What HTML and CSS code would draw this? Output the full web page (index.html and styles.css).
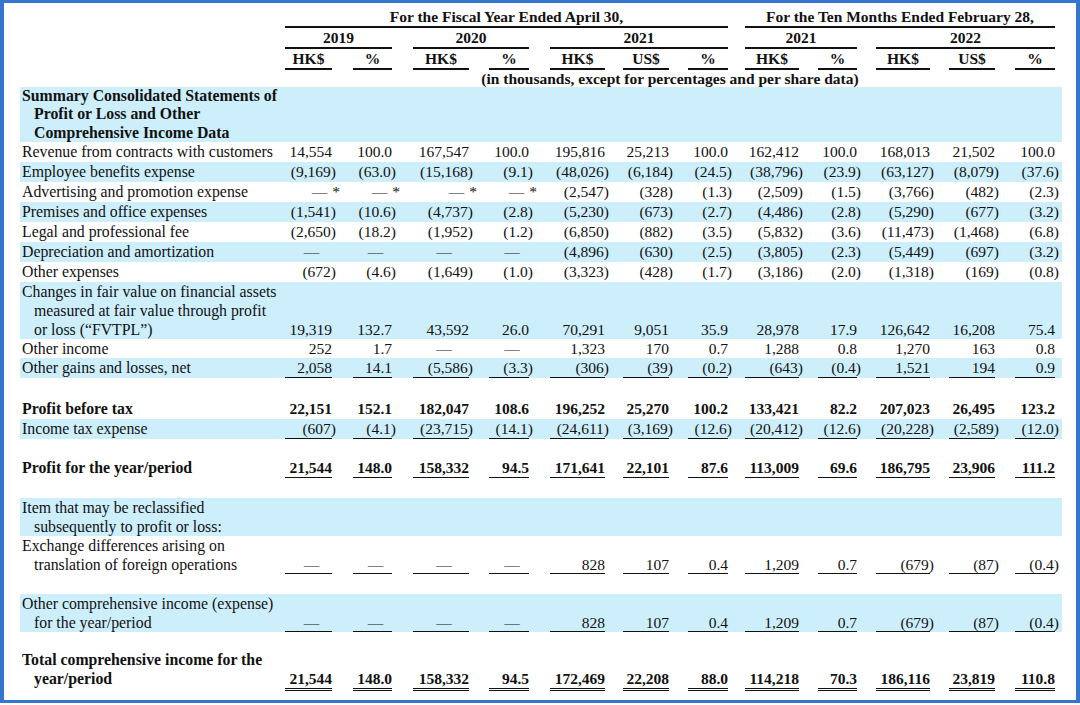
FILE: index.html
```html
<!DOCTYPE html>
<html lang="en">
<head>
<meta charset="utf-8">
<title>Summary Consolidated Statements</title>
<link rel="stylesheet" href="styles.css">
</head>
<body>
<div class="frame">
  <div class="row hdr">
    <div class="hc fy">For the Fiscal Year Ended April 30,</div>
    <div class="hc tm">For the Ten Months Ended February 28,</div>
  </div>
  <div class="row hdr">
    <div class="hc y19">2019</div>
    <div class="hc y20">2020</div>
    <div class="hc y21">2021</div>
    <div class="hc t21">2021</div>
    <div class="hc t22">2022</div>
  </div>
  <div class="row hdr cols">
    <div class="lbl"></div>
    <div class="hc">HK$</div><div class="hc">%</div>
    <div class="hc">HK$</div><div class="hc">%</div>
    <div class="hc">HK$</div><div class="hc">US$</div><div class="hc">%</div>
    <div class="hc">HK$</div><div class="hc">%</div>
    <div class="hc">HK$</div><div class="hc">US$</div><div class="hc">%</div>
  </div>
  <div class="row hdr">
    <div class="note">(in thousands, except for percentages and per share data)</div>
  </div>

  <div class="row shade l185 bold">
    <div class="lbl">Summary Consolidated Statements of<br>Profit or Loss and Other<br>Comprehensive Income Data</div>
  </div>

  <div class="row data cols">
    <div class="lbl">Revenue from contracts with customers</div>
    <div>14,554</div><div>100.0</div><div>167,547</div><div>100.0</div>
    <div>195,816</div><div>25,213</div><div>100.0</div>
    <div>162,412</div><div>100.0</div>
    <div>168,013</div><div>21,502</div><div>100.0</div>
  </div>
  <div class="row data cols shade">
    <div class="lbl">Employee benefits expense</div>
    <div><span class="n">(9,169)</span></div><div><span class="n">(63.0)</span></div><div><span class="n">(15,168)</span></div><div><span class="n">(9.1)</span></div>
    <div><span class="n">(48,026)</span></div><div><span class="n">(6,184)</span></div><div><span class="n">(24.5)</span></div>
    <div><span class="n">(38,796)</span></div><div><span class="n">(23.9)</span></div>
    <div><span class="n">(63,127)</span></div><div><span class="n">(8,079)</span></div><div><span class="n">(37.6)</span></div>
  </div>
  <div class="row data cols">
    <div class="lbl">Advertising and promotion expense</div>
    <div class="ds">—<span class="fn">*</span></div><div class="ds">—<span class="fn">*</span></div><div class="ds">—<span class="fn">*</span></div><div class="ds">—<span class="fn">*</span></div>
    <div><span class="n">(2,547)</span></div><div><span class="n">(328)</span></div><div><span class="n">(1.3)</span></div>
    <div><span class="n">(2,509)</span></div><div><span class="n">(1.5)</span></div>
    <div><span class="n">(3,766)</span></div><div><span class="n">(482)</span></div><div><span class="n">(2.3)</span></div>
  </div>
  <div class="row data cols shade">
    <div class="lbl">Premises and office expenses</div>
    <div><span class="n">(1,541)</span></div><div><span class="n">(10.6)</span></div><div><span class="n">(4,737)</span></div><div><span class="n">(2.8)</span></div>
    <div><span class="n">(5,230)</span></div><div><span class="n">(673)</span></div><div><span class="n">(2.7)</span></div>
    <div><span class="n">(4,486)</span></div><div><span class="n">(2.8)</span></div>
    <div><span class="n">(5,290)</span></div><div><span class="n">(677)</span></div><div><span class="n">(3.2)</span></div>
  </div>
  <div class="row data cols">
    <div class="lbl">Legal and professional fee</div>
    <div><span class="n">(2,650)</span></div><div><span class="n">(18.2)</span></div><div><span class="n">(1,952)</span></div><div><span class="n">(1.2)</span></div>
    <div><span class="n">(6,850)</span></div><div><span class="n">(882)</span></div><div><span class="n">(3.5)</span></div>
    <div><span class="n">(5,832)</span></div><div><span class="n">(3.6)</span></div>
    <div><span class="n">(11,473)</span></div><div><span class="n">(1,468)</span></div><div><span class="n">(6.8)</span></div>
  </div>
  <div class="row data cols shade">
    <div class="lbl">Depreciation and amortization</div>
    <div class="d">—</div><div class="d">—</div><div class="d">—</div><div class="d">—</div>
    <div><span class="n">(4,896)</span></div><div><span class="n">(630)</span></div><div><span class="n">(2.5)</span></div>
    <div><span class="n">(3,805)</span></div><div><span class="n">(2.3)</span></div>
    <div><span class="n">(5,449)</span></div><div><span class="n">(697)</span></div><div><span class="n">(3.2)</span></div>
  </div>
  <div class="row data cols">
    <div class="lbl">Other expenses</div>
    <div><span class="n">(672)</span></div><div><span class="n">(4.6)</span></div><div><span class="n">(1,649)</span></div><div><span class="n">(1.0)</span></div>
    <div><span class="n">(3,323)</span></div><div><span class="n">(428)</span></div><div><span class="n">(1.7)</span></div>
    <div><span class="n">(3,186)</span></div><div><span class="n">(2.0)</span></div>
    <div><span class="n">(1,318)</span></div><div><span class="n">(169)</span></div><div><span class="n">(0.8)</span></div>
  </div>
  <div class="row data cols shade l19">
    <div class="lbl">Changes in fair value on financial assets<br>measured at fair value through profit<br>or loss (“FVTPL”)</div>
    <div>19,319</div><div>132.7</div><div>43,592</div><div>26.0</div>
    <div>70,291</div><div>9,051</div><div>35.9</div>
    <div>28,978</div><div>17.9</div>
    <div>126,642</div><div>16,208</div><div>75.4</div>
  </div>
  <div class="row data cols l19">
    <div class="lbl">Other income</div>
    <div>252</div><div>1.7</div><div class="d">—</div><div class="d">—</div>
    <div>1,323</div><div>170</div><div>0.7</div>
    <div>1,288</div><div>0.8</div>
    <div>1,270</div><div>163</div><div>0.8</div>
  </div>
  <div class="row data cols shade ul">
    <div class="lbl">Other gains and losses, net</div>
    <div>2,058</div><div>14.1</div><div><span class="n">(5,586)</span></div><div><span class="n">(3.3)</span></div>
    <div><span class="n">(306)</span></div><div><span class="n">(39)</span></div><div><span class="n">(0.2)</span></div>
    <div><span class="n">(643)</span></div><div><span class="n">(0.4)</span></div>
    <div>1,521</div><div>194</div><div>0.9</div>
  </div>

  <div class="sp s21"></div>

  <div class="row data cols bold">
    <div class="lbl">Profit before tax</div>
    <div>22,151</div><div>152.1</div><div>182,047</div><div>108.6</div>
    <div>196,252</div><div>25,270</div><div>100.2</div>
    <div>133,421</div><div>82.2</div>
    <div>207,023</div><div>26,495</div><div>123.2</div>
  </div>
  <div class="row data cols shade ul">
    <div class="lbl">Income tax expense</div>
    <div><span class="n">(607)</span></div><div><span class="n">(4.1)</span></div><div><span class="n">(23,715)</span></div><div><span class="n">(14.1)</span></div>
    <div><span class="n">(24,611)</span></div><div><span class="n">(3,169)</span></div><div><span class="n">(12.6)</span></div>
    <div><span class="n">(20,412)</span></div><div><span class="n">(12.6)</span></div>
    <div><span class="n">(20,228)</span></div><div><span class="n">(2,589)</span></div><div><span class="n">(12.0)</span></div>
  </div>

  <div class="sp s19"></div>

  <div class="row data cols bold ul">
    <div class="lbl">Profit for the year/period</div>
    <div>21,544</div><div>148.0</div><div>158,332</div><div>94.5</div>
    <div>171,641</div><div>22,101</div><div>87.6</div>
    <div>113,009</div><div>69.6</div>
    <div>186,795</div><div>23,906</div><div>111.2</div>
  </div>

  <div class="sp s20"></div>

  <div class="row shade l19">
    <div class="lbl">Item that may be reclassified<br>subsequently to profit or loss:</div>
  </div>
  <div class="row data cols l19 ul">
    <div class="lbl">Exchange differences arising on<br>translation of foreign operations</div>
    <div class="d">—</div><div class="d">—</div><div class="d">—</div><div class="d">—</div>
    <div>828</div><div>107</div><div>0.4</div>
    <div>1,209</div><div>0.7</div>
    <div><span class="n">(679)</span></div><div><span class="n">(87)</span></div><div><span class="n">(0.4)</span></div>
  </div>

  <div class="sp s20"></div>

  <div class="row data cols shade l19 ul">
    <div class="lbl">Other comprehensive income (expense)<br>for the year/period</div>
    <div class="d">—</div><div class="d">—</div><div class="d">—</div><div class="d">—</div>
    <div>828</div><div>107</div><div>0.4</div>
    <div>1,209</div><div>0.7</div>
    <div><span class="n">(679)</span></div><div><span class="n">(87)</span></div><div><span class="n">(0.4)</span></div>
  </div>

  <div class="sp s18"></div>

  <div class="row data cols bold l19 uu">
    <div class="lbl">Total comprehensive income for the<br>year/period</div>
    <div>21,544</div><div>148.0</div><div>158,332</div><div>94.5</div>
    <div>172,469</div><div>22,208</div><div>88.0</div>
    <div>114,218</div><div>70.3</div>
    <div>186,116</div><div>23,819</div><div>110.8</div>
  </div>
</div>
</body>
</html>
```
FILE: styles.css
```css
html, body {
  margin: 0;
  padding: 0;
  background: #fff;
}

body {
  font-family: "Liberation Serif", "Times New Roman", serif;
  font-size: 15.5px;
  color: #111;
}

.frame {
  box-sizing: border-box;
  width: 1080px;
  height: 703px;
  border: 3px solid #3575cf;
  border-left-width: 4px;
  border-right-width: 4px;
  padding: 3.5px 14px 0 16px;
  overflow: hidden;
}

.row {
  display: grid;
  grid-template-columns:
    265px
    47px 21px 39px 21px 56px 20px 40px 21px
    55px 18px 46px 19px 40px 17px
    54px 19px 39px 19px 54px 19px 46px 20px 40px
    7px;
  line-height: 20px;
}

.shade {
  background: #cdeefb;
}

.bold {
  font-weight: bold;
}

.l185 { line-height: 18.5px; }
.l19 { line-height: 19px; }

.lbl {
  grid-column: 1;
  padding-left: 14px;
  text-indent: -12px;
  font-size: 15.8px;
  white-space: nowrap;
}

/* header */
.hdr {
  font-weight: bold;
}

.hc {
  text-align: center;
  line-height: 19px;
  border-bottom: 2px solid #111;
  white-space: nowrap;
}

.fy { grid-column: 2 / 15; }
.tm { grid-column: 16 / 25; }
.y19 { grid-column: 2 / 5; }
.y20 { grid-column: 6 / 9; }
.y21 { grid-column: 10 / 15; }
.t21 { grid-column: 16 / 19; }
.t22 { grid-column: 20 / 25; }

.note {
  grid-column: 2 / 25;
  text-align: center;
  line-height: 17px;
  white-space: nowrap;
}

/* column placement */
.cols > :nth-child(2) { grid-column: 2; }
.cols > :nth-child(3) { grid-column: 4; }
.cols > :nth-child(4) { grid-column: 6; }
.cols > :nth-child(5) { grid-column: 8; }
.cols > :nth-child(6) { grid-column: 10; }
.cols > :nth-child(7) { grid-column: 12; }
.cols > :nth-child(8) { grid-column: 14; }
.cols > :nth-child(9) { grid-column: 16; }
.cols > :nth-child(10) { grid-column: 18; }
.cols > :nth-child(11) { grid-column: 20; }
.cols > :nth-child(12) { grid-column: 22; }
.cols > :nth-child(13) { grid-column: 24; }

/* data cells */
.data > :not(.lbl) {
  display: flex;
  align-items: flex-end;
  justify-content: flex-end;
  white-space: nowrap;
}

.data > .d {
  justify-content: center;
  padding-left: 6px;
}

.n {
  margin-right: -4px;
}

.fn {
  margin-left: 5px;
  margin-right: -8px;
}

.ul > :not(.lbl) {
  box-shadow: inset 0 -1px 0 #111;
}

.uu > :not(.lbl) {
  border-bottom: 3px double #111;
}

.uu > .lbl {
  padding-bottom: 3px;
}

/* vertical spacers between sections */
.sp { height: 20px; }
.sp.s21 { height: 21px; }
.sp.s19 { height: 19px; }
.sp.s18 { height: 18px; }
```
